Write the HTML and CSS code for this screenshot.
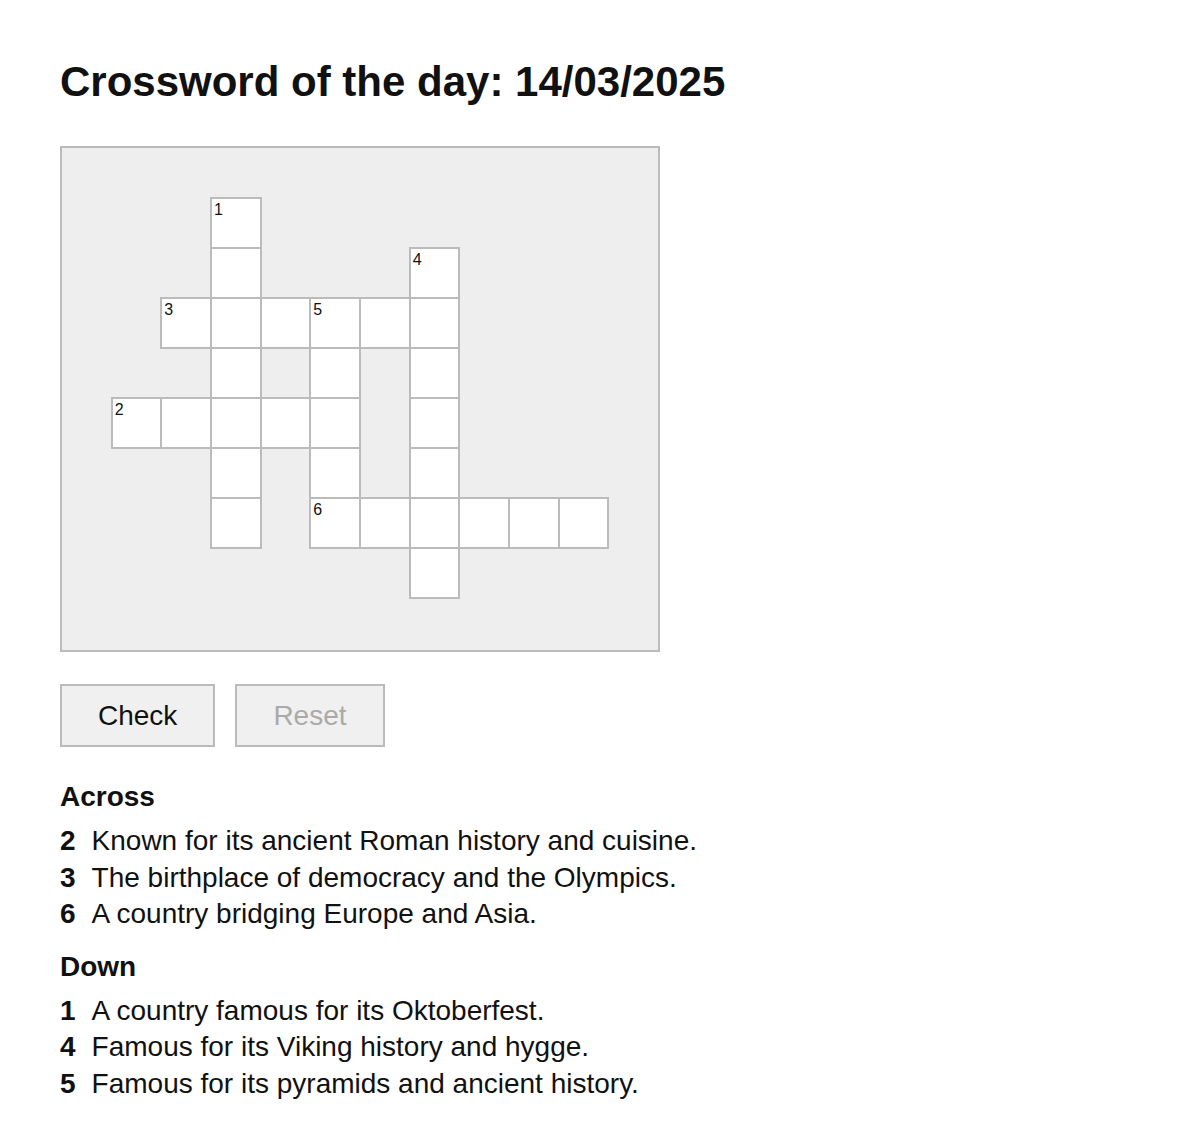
FILE: index.html
```html
<!DOCTYPE html>
<html lang="en">
<head>
  <meta charset="UTF-8" />
  <meta name="viewport" content="width=device-width, initial-scale=1.0" />
  <title>Crossword of the day</title>
  <link rel="stylesheet" href="styles.css">
</head>
<body>
  <div class="page">
    <h1>Crossword of the day: 14/03/2025</h1>

    <!-- board is filled in by the script below -->
    <div id="board" class="board"></div>

    <div class="actions">
      <button class="btn" id="checkBtn" onclick="checkAnswers()">Check</button>
      <button class="btn" id="resetBtn" onclick="resetBoard()" disabled>Reset</button>
    </div>

    <h3 class="clue-title">Across</h3>
    <ul id="acrossList" class="clue-list"></ul>

    <h3 class="clue-title">Down</h3>
    <ul id="downList" class="clue-list"></ul>
  </div>

  <script>
    const words = [
      { num: 2, dir: 'across', row: 5, col: 1, answer: 'ITALY', clue: 'Known for its ancient Roman history and cuisine.' },
      { num: 3, dir: 'across', row: 3, col: 2, answer: 'GREECE', clue: 'The birthplace of democracy and the Olympics.' },
      { num: 6, dir: 'across', row: 7, col: 5, answer: 'TURKEY', clue: 'A country bridging Europe and Asia.' },
      { num: 1, dir: 'down', row: 1, col: 3, answer: 'GERMANY', clue: 'A country famous for its Oktoberfest.' },
      { num: 4, dir: 'down', row: 2, col: 7, answer: 'DENMARK', clue: 'Famous for its Viking history and hygge.' },
      { num: 5, dir: 'down', row: 3, col: 5, answer: 'EGYPT', clue: 'Famous for its pyramids and ancient history.' }
    ];

    const cells = {};

    words.forEach(function (w) {
      for (let i = 0; i < w.answer.length; i++) {
        const r = w.dir === 'down' ? w.row + i : w.row;
        const c = w.dir === 'across' ? w.col + i : w.col;
        const key = r + '-' + c;
        if (!cells[key]) cells[key] = { row: r, col: c, letter: w.answer[i], num: null };
        if (i === 0) cells[key].num = w.num;
      }
    });

    const board = document.getElementById('board');
    Object.keys(cells).forEach(function (key) {
      const cell = cells[key];
      const div = document.createElement('div');
      div.className = 'cell';
      div.style.gridRow = cell.row + 1;
      div.style.gridColumn = cell.col + 1;

      if (cell.num) {
        const n = document.createElement('span');
        n.className = 'cell-num';
        n.textContent = cell.num;
        div.appendChild(n);
      }

      const input = document.createElement('input');
      input.maxLength = 1;
      input.dataset.answer = cell.letter;
      input.oninput = function () {
        document.getElementById('resetBtn').disabled = false;
      };
      div.appendChild(input);
      board.appendChild(div);
    });

    function fillClues(dir, listId) {
      const list = document.getElementById(listId);
      words.filter(w => w.dir === dir)
        .sort((a, b) => a.num - b.num)
        .forEach(function (w) {
          const li = document.createElement('li');
          li.innerHTML = '<b>' + w.num + '</b>' + w.clue;
          list.appendChild(li);
        });
    }
    fillClues('across', 'acrossList');
    fillClues('down', 'downList');

    function checkAnswers() {
      document.querySelectorAll('.cell input').forEach(function (input) {
        const ok = input.value.toUpperCase() === input.dataset.answer;
        input.classList.toggle('wrong', input.value !== '' && !ok);
      });
    }

    function resetBoard() {
      document.querySelectorAll('.cell input').forEach(function (input) {
        input.value = '';
        input.classList.remove('wrong');
      });
      document.getElementById('resetBtn').disabled = true;
    }
  </script>
</body>
</html>
```

FILE: styles.css
```css
body {
  font-family: "Liberation Sans", Arial, Helvetica, sans-serif;
  color: #111;
  background-color: #fff;
  margin: 0;
}
.page {
  padding: 0 60px 40px;
}
h1 {
  font-size: 42px;
  line-height: 48px;
  margin: 58px 0 0;
}
.board {
  width: 596px;
  margin-top: 40px;
  padding-bottom: 2px;
  border: 2px solid #bbb;
  background-color: #eee;
  display: grid;
  grid-template-columns: repeat(12, 1fr);
  grid-template-rows: repeat(10, 50px);
}
.cell {
  position: relative;
  background-color: #fff;
  outline: 2px solid #bbb;
  outline-offset: -1px;
}
.cell-num {
  position: absolute;
  top: 4px;
  left: 3px;
  font-size: 16px;
  line-height: 1;
  pointer-events: none;
}
.cell input {
  width: 100%;
  height: 100%;
  box-sizing: border-box;
  border: none;
  background: transparent;
  text-align: center;
  font-family: inherit;
  font-size: 26px;
  text-transform: uppercase;
  padding: 6px 0 0;
  outline: none;
}
.cell input.wrong {
  color: #c00;
}
.actions {
  display: flex;
  gap: 20px;
  margin-top: 32px;
}
.btn {
  height: 63px;
  padding: 0 36px;
  font-family: inherit;
  font-size: 28px;
  color: #111;
  background-color: #f0f0f0;
  border: 2px solid #bbb;
  cursor: pointer;
}
.btn:disabled {
  color: #aaa;
  cursor: default;
}
.clue-title {
  font-size: 28px;
  line-height: 1.3;
  margin: 32px 0 8px;
}
.clue-list + .clue-title {
  margin-top: 16px;
}
.clue-list {
  list-style: none;
  margin: 0;
  padding: 0;
  font-size: 28px;
  line-height: 1.3;
}
.clue-list b {
  margin-right: 16px;
}
```
